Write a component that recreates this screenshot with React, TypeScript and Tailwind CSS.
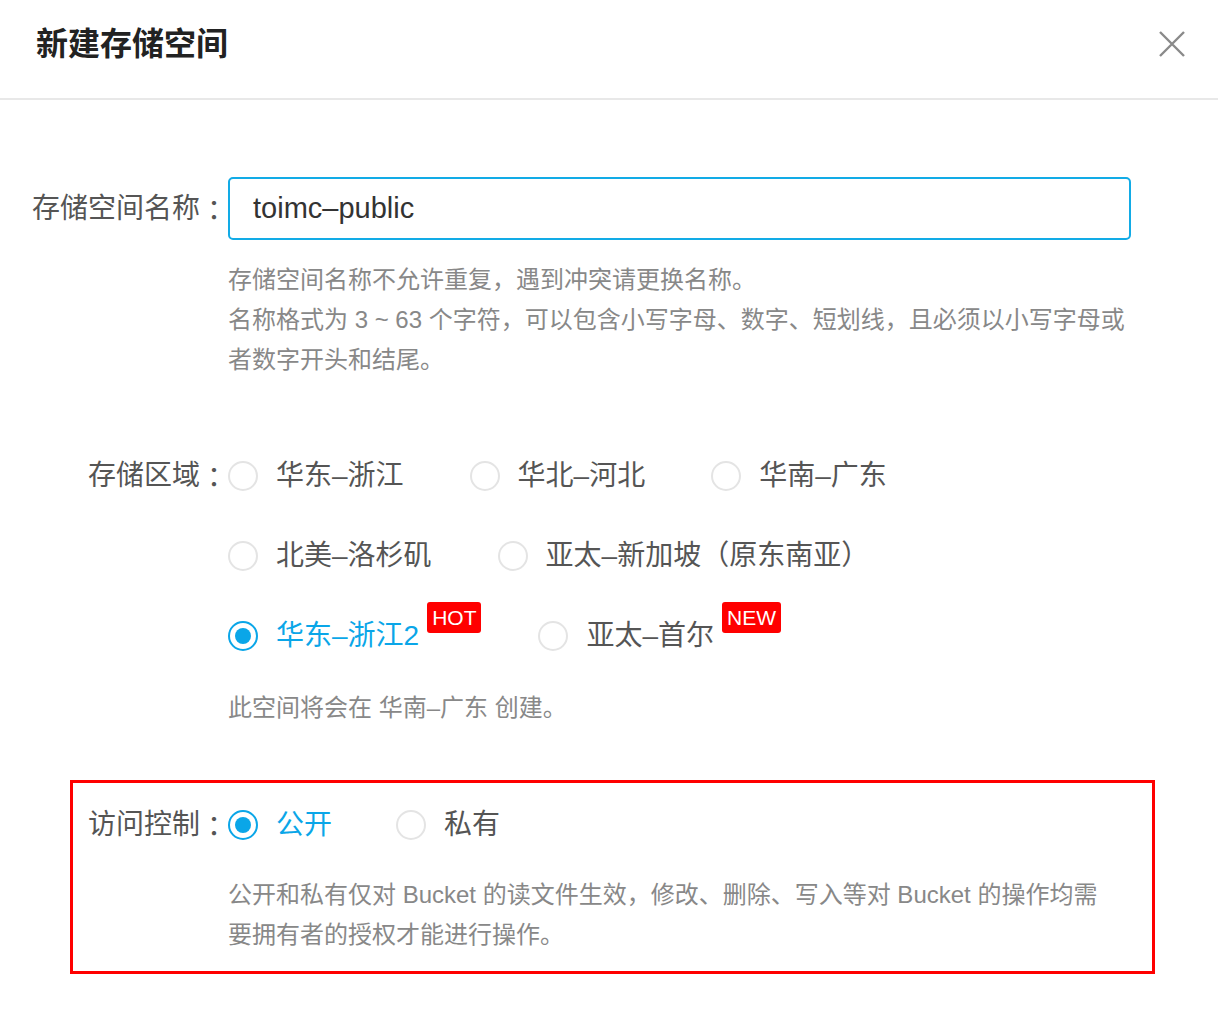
const blue = 'text-[#0aa6e8]'

function Radio({ checked }: { checked?: boolean }) {
  return (
    <span
      className={
        checked
          ? 'flex h-[30px] w-[30px] shrink-0 items-center justify-center rounded-full border-2 border-[#0aa6e8]'
          : 'flex h-[30px] w-[30px] shrink-0 items-center justify-center rounded-full border-2 border-[#e4e4e4]'
      }
    >
      {checked && <span className="h-[16px] w-[16px] rounded-full bg-[#0aa6e8]" />}
    </span>
  )
}

function Badge({ text }: { text: string }) {
  return (
    <span className="ml-[8px] -mt-[14px] flex h-[31px] items-center self-start rounded-[3px] bg-[#ff0000] px-[5px] text-[21px] leading-none text-white">
      {text}
    </span>
  )
}

function Option({
  label,
  checked,
  badge,
  className = '',
}: {
  label: string
  checked?: boolean
  badge?: string
  className?: string
}) {
  return (
    <label className={`flex h-[40px] items-center ${className}`}>
      <Radio checked={checked} />
      <span className={`ml-[18px] text-[28px] leading-[40px] whitespace-nowrap ${checked ? blue : 'text-[#555]'}`}>
        {label}
      </span>
      {badge && <Badge text={badge} />}
    </label>
  )
}

// label with a centred full-width colon
function FieldLabel({ text, className = '' }: { text: string; className?: string }) {
  return (
    <div className={`flex h-[40px] shrink-0 items-center justify-end text-[28px] leading-[40px] whitespace-nowrap text-[#555] ${className}`}>
      <span>{text}</span>
      <span className="font-['Noto_Sans_CJK_TC',sans-serif] leading-[40px]">：</span>
    </div>
  )
}

export default function App() {
  return (
    <div className="min-h-[1010px] w-[1218px] bg-white font-['Liberation_Sans','Noto_Sans_CJK_SC',sans-serif]">
      {/* header */}
      <div className="flex h-[100px] items-center justify-between border-b-2 border-[#e8e8e8] pb-[10px] pl-[36px] pr-[33px]">
        <h1 className="text-[32px] font-bold leading-none text-[#222]">新建存储空间</h1>
        <svg width="26" height="26" viewBox="0 0 26 26" fill="none" stroke="#8a8a8a" strokeWidth="2.4">
          <path d="M1 1 L25 25 M25 1 L1 25" />
        </svg>
      </div>

      <div className="pt-[77px]">
        {/* bucket name */}
        <div className="flex items-center">
          <FieldLabel text="存储空间名称" className="w-[228px]" />
          <div className="flex h-[63px] w-[903px] items-center rounded-[5px] border-2 border-[#12abe6] pl-[23px] text-[29px] text-[#333]">
            toimc–public
          </div>
        </div>
        <div className="ml-[228px] mt-[20px] text-[24px] leading-[40px] text-[#888]">
          <p>存储空间名称不允许重复，遇到冲突请更换名称。</p>
          <p className="whitespace-nowrap">名称格式为 3 ~ 63 个字符，可以包含小写字母、数字、短划线，且必须以小写字母或</p>
          <p>者数字开头和结尾。</p>
        </div>

        {/* region */}
        <div className="mt-[76px] flex items-start">
          <FieldLabel text="存储区域" className="w-[228px]" />
          <div className="flex flex-col gap-[40px]">
            <div className="flex">
              <Option label="华东–浙江" className="mr-[66px]" />
              <Option label="华北–河北" className="mr-[66px]" />
              <Option label="华南–广东" />
            </div>
            <div className="flex">
              <Option label="北美–洛杉矶" className="mr-[66px]" />
              <Option label="亚太–新加坡（原东南亚）" />
            </div>
            <div className="flex">
              <Option label="华东–浙江2" checked badge="HOT" className="mr-[57px]" />
              <Option label="亚太–首尔" badge="NEW" />
            </div>
          </div>
        </div>
        <p className="ml-[228px] mt-[32px] text-[24px] leading-[40px] text-[#888]">此空间将会在 华南–广东 创建。</p>

        {/* access control */}
        <div className="ml-[70px] mt-[52px] w-[1085px] border-[3px] border-[#ff0000] pb-[16px] pt-[22px]">
          <div className="flex items-center">
            <FieldLabel text="访问控制" className="w-[155px]" />
            <div className="flex">
              <Option label="公开" checked className="mr-[64px]" />
              <Option label="私有" />
            </div>
          </div>
          <div className="ml-[155px] mt-[30px] text-[24px] leading-[40px] text-[#888]">
            <p className="whitespace-nowrap">公开和私有仅对 Bucket 的读文件生效，修改、删除、写入等对 Bucket 的操作均需</p>
            <p>要拥有者的授权才能进行操作。</p>
          </div>
        </div>
      </div>
    </div>
  )
}
